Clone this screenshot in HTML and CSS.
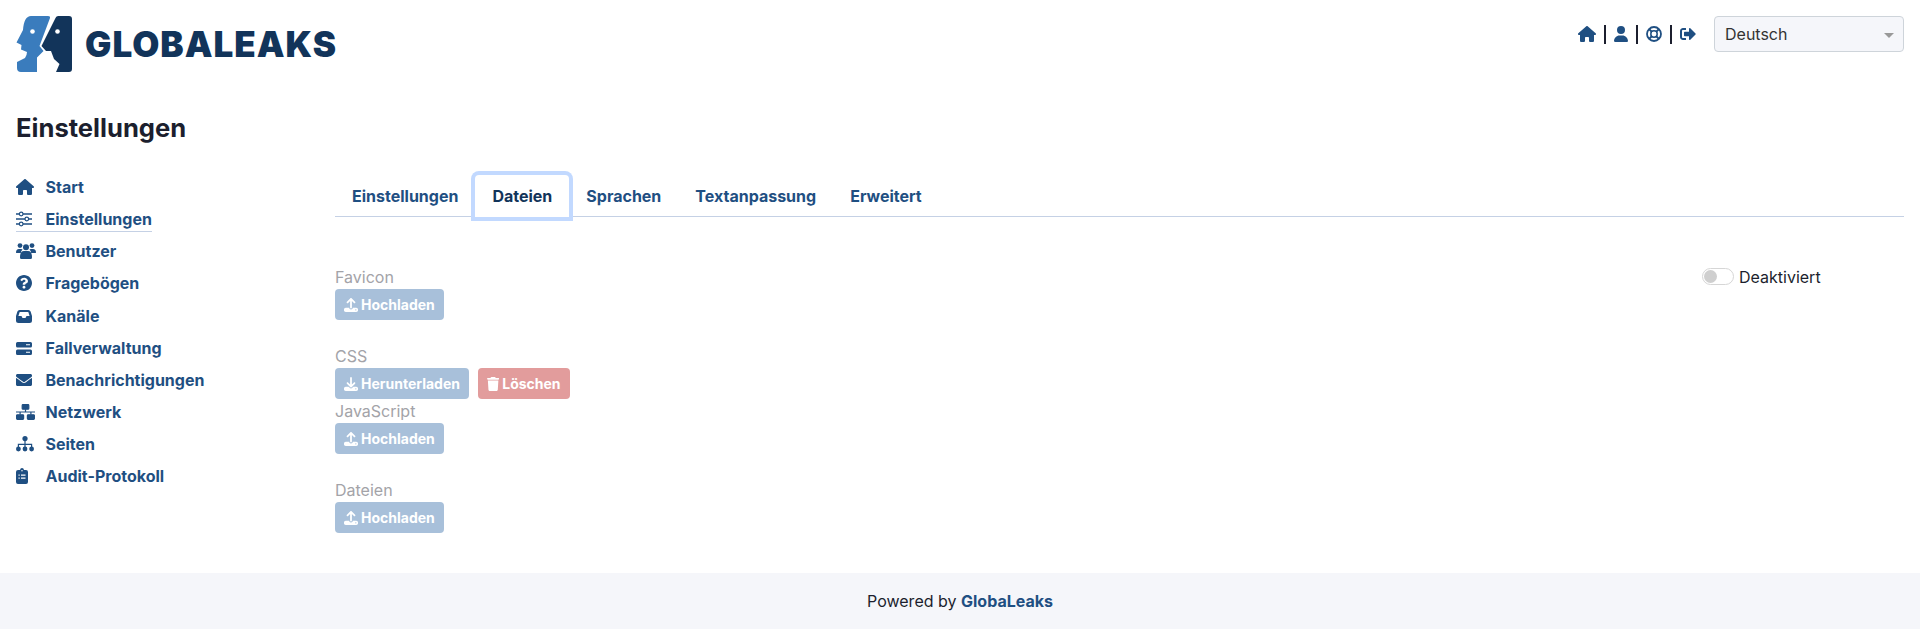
FILE: index.html
```html
<!DOCTYPE html>
<html lang="de">
<head>
    <meta charset="UTF-8">
    <meta name="viewport" content="width=device-width, initial-scale=1.0">
    <title>Einstellungen - GlobaLeaks</title>
    <link rel="stylesheet" href="styles.css">
</head>
<body>
    <header class="topbar">
        <a class="brand" href="#">
            <svg class="brand-logo" viewBox="16 16 56 56" aria-hidden="true">
                <path fill="#3a7cbd" d="M31 16H48Q50.5 16 50 18L39.5 46L43.5 51L37 57.5V72H21Q17 72 17 68V62L25 58Q27 55 27 52L21 49.5L21.5 45L16.5 42.5L23 30Q24 16 31 16Z"/>
                <path fill="#12345a" d="M58 16H69Q72 16 72 19V69Q72 72 69 72H56L59.5 64L54 59L51 51H46L41.5 46L55 19Q56 16 58 16Z"/>
                <circle fill="#fff" cx="32.5" cy="31.5" r="2.3"/>
                <circle fill="#fff" cx="57.5" cy="31.5" r="2.3"/>
            </svg>
            <span class="brand-name">GLOBALEAKS</span>
        </a>
        <div class="topbar-right">
            <nav class="quick-links">
                <a href="#"><svg class="icon" viewBox="0 0 576 512"><path d="M575.8 255.5c0 18-15 32.1-32 32.1h-32l.7 160.2c0 2.7-.2 5.4-.5 8.1V472c0 22.1-17.9 40-40 40H456c-1.1 0-2.2 0-3.3-.1c-1.4 .1-2.8 .1-4.2 .1H416 392c-22.1 0-40-17.9-40-40V448 384c0-17.7-14.3-32-32-32H256c-17.7 0-32 14.3-32 32v64 24c0 22.1-17.9 40-40 40H160 128.1c-1.5 0-3-.1-4.5-.2c-1.2 .1-2.4 .2-3.6 .2H104c-22.1 0-40-17.9-40-40V360c0-.9 0-1.9 .1-2.8V287.6H32c-18 0-32-14-32-32.1c0-9 3-17 10-24L266.4 8c7-7 15-8 22-8s15 2 21 7L564.8 231.5c8 7 12 15 11 24z"/></svg></a>
                <span class="sep"></span>
                <a href="#"><svg class="icon" viewBox="0 0 448 512"><path d="M224 256A128 128 0 1 0 224 0a128 128 0 1 0 0 256zm-45.7 48C79.8 304 0 383.8 0 482.3C0 498.7 13.3 512 29.7 512H418.3c16.4 0 29.7-13.3 29.7-29.7C448 383.8 368.2 304 269.7 304H178.3z"/></svg></a>
                <span class="sep"></span>
                <a href="#"><svg class="icon" viewBox="0 0 16 16"><circle cx="8" cy="8" r="7" fill="none" stroke="currentColor" stroke-width="1.8"/><circle cx="8" cy="8" r="3.2" fill="none" stroke="currentColor" stroke-width="1.5"/><path d="M3 3L6 6M13 3L10 6M3 13L6 10M13 13L10 10" stroke="currentColor" stroke-width="1.8"/></svg></a>
                <span class="sep"></span>
                <a href="#"><svg class="icon" viewBox="0 0 512 512"><path d="M497 273L329 441c-15 15-41 4.5-41-17v-96H152c-13.3 0-24-10.7-24-24v-96c0-13.3 10.7-24 24-24h136V88c0-21.4 25.9-32 41-17l168 168c9.3 9.4 9.3 24.6 0 34zM192 436v-40c0-6.6-5.4-12-12-12H96c-17.7 0-32-14.3-32-32V160c0-17.7 14.3-32 32-32h84c6.6 0 12-5.4 12-12V76c0-6.6-5.4-12-12-12H96c-53 0-96 43-96 96v192c0 53 43 96 96 96h84c6.6 0 12-5.4 12-12z"/></svg></a>
            </nav>
            <div class="lang-select">
                <select>
                    <option>Deutsch</option>
                </select>
            </div>
        </div>
    </header>

    <h1 class="page-title">Einstellungen</h1>

    <div class="layout">
        <nav class="sidebar">
            <a class="side-link" href="#"><span class="side-icon"><svg viewBox="0 0 576 512"><path d="M575.8 255.5c0 18-15 32.1-32 32.1h-32l.7 160.2c0 2.7-.2 5.4-.5 8.1V472c0 22.1-17.9 40-40 40H456c-1.1 0-2.2 0-3.3-.1c-1.4 .1-2.8 .1-4.2 .1H416 392c-22.1 0-40-17.9-40-40V448 384c0-17.7-14.3-32-32-32H256c-17.7 0-32 14.3-32 32v64 24c0 22.1-17.9 40-40 40H160 128.1c-1.5 0-3-.1-4.5-.2c-1.2 .1-2.4 .2-3.6 .2H104c-22.1 0-40-17.9-40-40V360c0-.9 0-1.9 .1-2.8V287.6H32c-18 0-32-14-32-32.1c0-9 3-17 10-24L266.4 8c7-7 15-8 22-8s15 2 21 7L564.8 231.5c8 7 12 15 11 24z"/></svg></span>Start</a>
            <a class="side-link active" href="#"><span class="side-icon"><svg viewBox="0 0 16 16"><path d="M0 3H3.4M7 3H16M0 8H9M12.6 8H16M0 13H3.4M7 13H16" stroke="currentColor" stroke-width="1.4" fill="none"/><circle cx="5.2" cy="3" r="1.8" fill="none" stroke="currentColor" stroke-width="1.2"/><circle cx="10.8" cy="8" r="1.8" fill="none" stroke="currentColor" stroke-width="1.2"/><circle cx="5.2" cy="13" r="1.8" fill="none" stroke="currentColor" stroke-width="1.2"/></svg></span>Einstellungen</a>
            <a class="side-link" href="#"><span class="side-icon"><svg viewBox="0 0 20 16"><circle cx="4" cy="2.6" r="2.4"/><circle cx="16" cy="2.6" r="2.4"/><circle cx="10" cy="4.2" r="3"/><path d="M0 9.5Q0 6 3 6H5.2Q6 6 6.6 6.6Q5 8 4.8 10H1Q0 10 0 9.5ZM20 9.5Q20 6 17 6H14.8Q14 6 13.4 6.6Q15 8 15.2 10H19Q20 10 20 9.5ZM4 14.4Q4 8 8 8H12Q16 8 16 14.4Q16 16 14.6 16H5.4Q4 16 4 14.4Z"/></svg></span>Benutzer</a>
            <a class="side-link" href="#"><span class="side-icon"><svg viewBox="8 8 496 496"><path d="M504 256c0 136.997-111.043 248-248 248S8 392.997 8 256C8 119.083 119.043 8 256 8s248 111.083 248 248zM262.655 90c-54.497 0-89.255 22.957-116.549 63.758-3.536 5.286-2.353 12.415 2.715 16.258l34.699 26.31c5.205 3.947 12.621 3.008 16.665-2.122 17.864-22.658 30.113-35.797 57.303-35.797 20.429 0 45.698 13.148 45.698 32.958 0 14.976-12.363 22.667-32.534 33.976C247.128 238.528 216 254.941 216 296v4c0 6.627 5.373 12 12 12h56c6.627 0 12-5.373 12-12v-1.333c0-28.462 83.186-29.647 83.186-106.667 0-58.002-60.165-102-116.531-102zM256 338c-25.365 0-46 20.635-46 46 0 25.364 20.635 46 46 46s46-20.636 46-46c0-25.365-20.635-46-46-46z"/></svg></span>Fragebögen</a>
            <a class="side-link" href="#"><span class="side-icon"><svg viewBox="0 0 16 16"><path fill-rule="evenodd" d="M3.5 2H12.5Q14 2 14.6 3.5L16 8V12.5Q16 15 13.5 15H2.5Q0 15 0 12.5V8L1.4 3.5Q2 2 3.5 2ZM3.7 4L2.4 8H5.5L6.5 10H9.5L10.5 8H13.6L12.3 4Z"/></svg></span>Kanäle</a>
            <a class="side-link" href="#"><span class="side-icon"><svg viewBox="0 0 16 16"><path fill-rule="evenodd" d="M1.5 2H14.5Q16 2 16 3.5V6Q16 7.5 14.5 7.5H1.5Q0 7.5 0 6V3.5Q0 2 1.5 2ZM10 4.2V5.3H14V4.2ZM1.5 9.5H14.5Q16 9.5 16 11V13.5Q16 15 14.5 15H1.5Q0 15 0 13.5V11Q0 9.5 1.5 9.5ZM10 11.7V12.8H14V11.7Z"/></svg></span>Fallverwaltung</a>
            <a class="side-link" href="#"><span class="side-icon"><svg viewBox="0 0 512 512"><path d="M502.3 190.8c3.9-3.1 9.7-.2 9.7 4.7V400c0 26.5-21.5 48-48 48H48c-26.5 0-48-21.5-48-48V195.6c0-5 5.7-7.8 9.7-4.7 22.4 17.4 52.1 39.5 154.1 113.6 21.1 15.4 56.7 47.8 92.2 47.6 35.7.3 72-32.8 92.3-47.6 102-74.1 131.6-96.3 154-113.7zM256 320c23.2.4 56.6-29.2 73.4-41.4 132.7-96.3 142.8-104.7 173.4-128.7 5.8-4.5 9.2-11.5 9.2-18.9v-19c0-26.5-21.5-48-48-48H48C21.5 64 0 85.5 0 112v19c0 7.4 3.4 14.3 9.2 18.9 30.6 23.9 40.7 32.4 173.4 128.7 16.8 12.2 50.2 41.8 73.4 41.4z"/></svg></span>Benachrichtigungen</a>
            <a class="side-link" href="#"><span class="side-icon"><svg viewBox="0 0 19 16" fill="none" stroke="currentColor" stroke-width="1.2"><rect x="6.2" y="0.6" width="6.6" height="4.6" rx=".8"/><rect x="0.6" y="10.8" width="7" height="4.6" rx=".8"/><rect x="11.4" y="10.8" width="7" height="4.6" rx=".8"/><path d="M9.5 5.2V8M0 8H19M4.1 8V10.8M14.9 8V10.8"/></svg></span>Netzwerk</a>
            <a class="side-link" href="#"><span class="side-icon"><svg viewBox="0 0 18 16"><circle cx="9" cy="2.6" r="2.6"/><circle cx="2.4" cy="13" r="2.4"/><circle cx="9" cy="13" r="2.4"/><circle cx="15.6" cy="13" r="2.4"/><path d="M9 4V11M2.4 11V8.4H15.6V11" fill="none" stroke="currentColor" stroke-width="1.2"/></svg></span>Seiten</a>
            <a class="side-link" href="#"><span class="side-icon"><svg viewBox="0 0 12 16"><path fill-rule="evenodd" d="M4 2Q4.3 0 6 0Q7.7 0 8 2H10Q12 2 12 4V14Q12 16 10 16H2Q0 16 0 14V4Q0 2 2 2ZM5.2 2.2V3.2H6.8V2.2ZM2.5 6.5V7.7H3.7V6.5ZM5 6.5V7.7H9.5V6.5ZM2.5 9.5V10.7H3.7V9.5ZM5 9.5V10.7H9.5V9.5Z"/></svg></span>Audit-Protokoll</a>
        </nav>

        <main class="content">
            <ul class="tabs">
                <li><a href="#">Einstellungen</a></li>
                <li><a class="current" href="#">Dateien</a></li>
                <li><a href="#">Sprachen</a></li>
                <li><a href="#">Textanpassung</a></li>
                <li><a href="#">Erweitert</a></li>
            </ul>

            <div class="files">
                <div class="file-rows">
                    <div class="file-group spaced">
                        <label>Favicon</label>
                        <div class="btn-row">
                            <button class="btn"><svg viewBox="0 0 512 512"><path d="M288 109.3V352c0 17.7-14.3 32-32 32s-32-14.3-32-32V109.3l-73.4 73.4c-12.5 12.5-32.8 12.5-45.3 0s-12.5-32.8 0-45.3l128-128c12.5-12.5 32.8-12.5 45.3 0l128 128c12.5 12.5 12.5 32.8 0 45.3s-32.8 12.5-45.3 0L288 109.3zM64 352H192c0 35.3 28.7 64 64 64s64-28.7 64-64H448c35.3 0 64 28.7 64 64v32c0 35.3-28.7 64-64 64H64c-35.3 0-64-28.7-64-64V416c0-35.3 28.7-64 64-64zM432 456a24 24 0 1 0 0-48 24 24 0 1 0 0 48z"/></svg>Hochladen</button>
                        </div>
                    </div>
                    <div class="file-group">
                        <label>CSS</label>
                        <div class="btn-row">
                            <button class="btn"><svg viewBox="0 0 512 512"><path d="M288 32c0-17.7-14.3-32-32-32s-32 14.3-32 32V274.7l-73.4-73.4c-12.5-12.5-32.8-12.5-45.3 0s-12.5 32.8 0 45.3l128 128c12.5 12.5 32.8 12.5 45.3 0l128-128c12.5-12.5 12.5-32.8 0-45.3s-32.8-12.5-45.3 0L288 274.7V32zM64 352c-35.3 0-64 28.7-64 64v32c0 35.3 28.7 64 64 64H448c35.3 0 64-28.7 64-64V416c0-35.3-28.7-64-64-64H346.5l-45.3 45.3c-25 25-65.5 25-90.5 0L165.5 352H64zm368 56a24 24 0 1 1 0 48 24 24 0 1 1 0-48z"/></svg>Herunterladen</button>
                            <button class="btn btn-danger"><svg viewBox="0 0 448 512"><path d="M135.2 17.7L128 32H32C14.3 32 0 46.3 0 64S14.3 96 32 96H416c17.7 0 32-14.3 32-32s-14.3-32-32-32H320l-7.2-14.3C307.4 6.8 296.3 0 284.2 0H163.8c-12.1 0-23.2 6.8-28.6 17.7zM416 128H32L53.2 467c1.6 25.3 22.6 45 47.9 45H346.9c25.3 0 46.3-19.7 47.9-45L416 128z"/></svg>Löschen</button>
                        </div>
                    </div>
                    <div class="file-group spaced">
                        <label>JavaScript</label>
                        <div class="btn-row">
                            <button class="btn"><svg viewBox="0 0 512 512"><path d="M288 109.3V352c0 17.7-14.3 32-32 32s-32-14.3-32-32V109.3l-73.4 73.4c-12.5 12.5-32.8 12.5-45.3 0s-12.5-32.8 0-45.3l128-128c12.5-12.5 32.8-12.5 45.3 0l128 128c12.5 12.5 12.5 32.8 0 45.3s-32.8 12.5-45.3 0L288 109.3zM64 352H192c0 35.3 28.7 64 64 64s64-28.7 64-64H448c35.3 0 64 28.7 64 64v32c0 35.3-28.7 64-64 64H64c-35.3 0-64-28.7-64-64V416c0-35.3 28.7-64 64-64zM432 456a24 24 0 1 0 0-48 24 24 0 1 0 0 48z"/></svg>Hochladen</button>
                        </div>
                    </div>
                    <div class="file-group">
                        <label>Dateien</label>
                        <div class="btn-row">
                            <button class="btn"><svg viewBox="0 0 512 512"><path d="M288 109.3V352c0 17.7-14.3 32-32 32s-32-14.3-32-32V109.3l-73.4 73.4c-12.5 12.5-32.8 12.5-45.3 0s-12.5-32.8 0-45.3l128-128c12.5-12.5 32.8-12.5 45.3 0l128 128c12.5 12.5 12.5 32.8 0 45.3s-32.8 12.5-45.3 0L288 109.3zM64 352H192c0 35.3 28.7 64 64 64s64-28.7 64-64H448c35.3 0 64 28.7 64 64v32c0 35.3-28.7 64-64 64H64c-35.3 0-64-28.7-64-64V416c0-35.3 28.7-64 64-64zM432 456a24 24 0 1 0 0-48 24 24 0 1 0 0 48z"/></svg>Hochladen</button>
                        </div>
                    </div>
                </div>
                <div class="status">
                    <span class="switch"></span>
                    <span>Deaktiviert</span>
                </div>
            </div>
        </main>
    </div>

    <footer class="footer">
        Powered by <a href="#">GlobaLeaks</a>
    </footer>
</body>
</html>
```

FILE: styles.css
```css
* {
    box-sizing: border-box;
}
html,
body {
    height: 100%;
}
body {
    font-family: 'Inter', sans-serif;
    font-size: 16px;
    line-height: 24px;
    color: #1c1f2e;
    background-color: white;
    margin: 0;
    display: flex;
    flex-direction: column;
}
a {
    color: #1f4f82;
    text-decoration: none;
}
.topbar {
    display: flex;
    justify-content: space-between;
    padding: 16px 16px 0;
}
.brand {
    display: flex;
    align-items: center;
    gap: 13px;
    height: 56px;
}
.brand-logo {
    width: 56px;
    height: 56px;
}
.brand-name {
    font-size: 35px;
    font-weight: 900;
    letter-spacing: 1px;
    line-height: 1;
    color: #12345a;
    margin-top: 1px;
}
.topbar-right {
    display: flex;
    gap: 18px;
    height: 36px;
}
.quick-links {
    display: flex;
    align-items: center;
    gap: 8px;
}
.quick-links a {
    display: flex;
}
.icon {
    height: 16px;
    fill: currentColor;
}
.sep {
    width: 2px;
    height: 19px;
    background-color: #1c1f2e;
}
.lang-select {
    position: relative;
    width: 190px;
}
.lang-select::after {
    content: "";
    position: absolute;
    right: 10px;
    top: 17px;
    border-left: 5px solid transparent;
    border-right: 5px solid transparent;
    border-top: 5px solid #999;
}
.lang-select select {
    appearance: none;
    width: 100%;
    height: 36px;
    padding: 0 10px;
    font-family: inherit;
    font-size: 16px;
    color: #333;
    background-color: #f5f6fa;
    border: 1px solid #ced4da;
    border-radius: 4px;
}
.page-title {
    font-size: 25.6px;
    font-weight: 700;
    line-height: 29px;
    margin: 41px 16px 29px;
}
.layout {
    display: flex;
    flex: 1;
    padding: 0 16px;
}
.sidebar {
    width: 319px;
    flex-shrink: 0;
    display: flex;
    flex-direction: column;
    align-items: flex-start;
}
.side-link {
    display: flex;
    align-items: center;
    height: 32.15px;
    font-weight: 700;
}
.side-link.active {
    position: relative;
}
.side-link.active::after {
    content: "";
    position: absolute;
    left: 0;
    right: 0;
    bottom: 3px;
    border-bottom: 1px solid #c5d1e5;
}
.side-icon {
    width: 18px;
    height: 16px;
    margin-right: 11.5px;
    display: flex;
}
.side-icon svg {
    height: 16px;
    flex-shrink: 0;
    fill: currentColor;
}
.content {
    flex: 1;
    padding-top: 4px;
}
.tabs {
    display: flex;
    list-style-type: none;
    margin: 0;
    padding: 0;
    border-bottom: 1px solid #c5d1e5;
}
.tabs a {
    display: block;
    margin-bottom: -1px;
    padding: 9px 17px;
    font-weight: 700;
}
.tabs a.current {
    color: #12345a;
    background-color: white;
    border-radius: 4px 4px 0 0;
    box-shadow: 0 0 0 4px #c2d9ff;
}
.files {
    display: flex;
    justify-content: space-between;
    padding-top: 48px;
}
.file-group label {
    display: block;
    color: #a3a3a8;
}
.file-group.spaced {
    margin-bottom: 24px;
}
.btn-row {
    display: flex;
    gap: 9px;
}
.btn {
    display: flex;
    align-items: center;
    gap: 3px;
    height: 31px;
    padding: 0 9px;
    font-family: inherit;
    font-size: 14px;
    font-weight: 700;
    color: white;
    background-color: #a8c0da;
    border: none;
    border-radius: 4px;
}
.btn svg {
    height: 14px;
    fill: currentColor;
}
.btn-danger {
    background-color: #e29c9c;
}
.status {
    width: 202px;
    display: flex;
    align-items: flex-start;
    gap: 5px;
}
.switch {
    position: relative;
    width: 32px;
    height: 17px;
    margin-top: 3px;
    border: 1px solid #d6d6d6;
    border-radius: 9px;
}
.switch::before {
    content: "";
    position: absolute;
    left: 1px;
    top: 1px;
    width: 13px;
    height: 13px;
    border-radius: 50%;
    background-color: #cfcfcf;
}
.footer {
    height: 56px;
    padding-top: 16px;
    text-align: center;
    background-color: #f5f6fa;
}
.footer a {
    font-weight: 700;
}
```
